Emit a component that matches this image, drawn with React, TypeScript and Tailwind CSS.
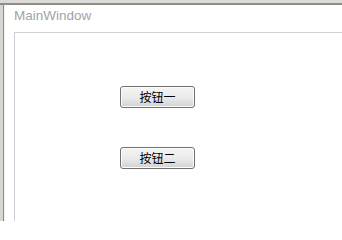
import React from "react";

const QtButton = ({ label }: { label: string }) => (
  <button className="w-[75px] h-[22px] rounded-[3px] border border-[#707070] bg-gradient-to-b from-[#f4f4f4] via-[#ebebeb] to-[#d2d2d2] text-[12px] leading-[20px] text-black shadow-[inset_0_0_0_1px_#fcfcfc] [font-family:'Noto_Sans_CJK_SC',sans-serif]">
    {label}
  </button>
);

const App = () => {
  return (
    <div className="w-[342px] h-[221px] flex flex-col bg-white overflow-hidden [font-family:'Liberation_Sans',sans-serif]">
      {/* window frame top */}
      <div className="h-[3px] bg-[#dadada]" />
      <div className="h-[2px] bg-[#8e8e7c]" />

      <div className="flex flex-1">
        {/* window frame left */}
        <div className="w-[3px] bg-[#d6d6d6]" />
        <div className="w-[1px] bg-[#8a8a86]" />
        <div className="w-[1px] bg-[#f6f6ea]" />

        <div className="flex-1 flex flex-col pl-[9px]">
          <div className="h-[27px] pt-[3px] text-[13.5px] leading-[15px] text-[#a3a3a3]">
            MainWindow
          </div>

          {/* central frame */}
          <div className="flex-1 border-l border-t border-[#cdd0d4] flex flex-col items-start pl-[105px] pt-[53px] gap-[39px]">
            <QtButton label="按钮一" />
            <QtButton label="按钮二" />
          </div>
        </div>
      </div>
    </div>
  );
};

export default App;
